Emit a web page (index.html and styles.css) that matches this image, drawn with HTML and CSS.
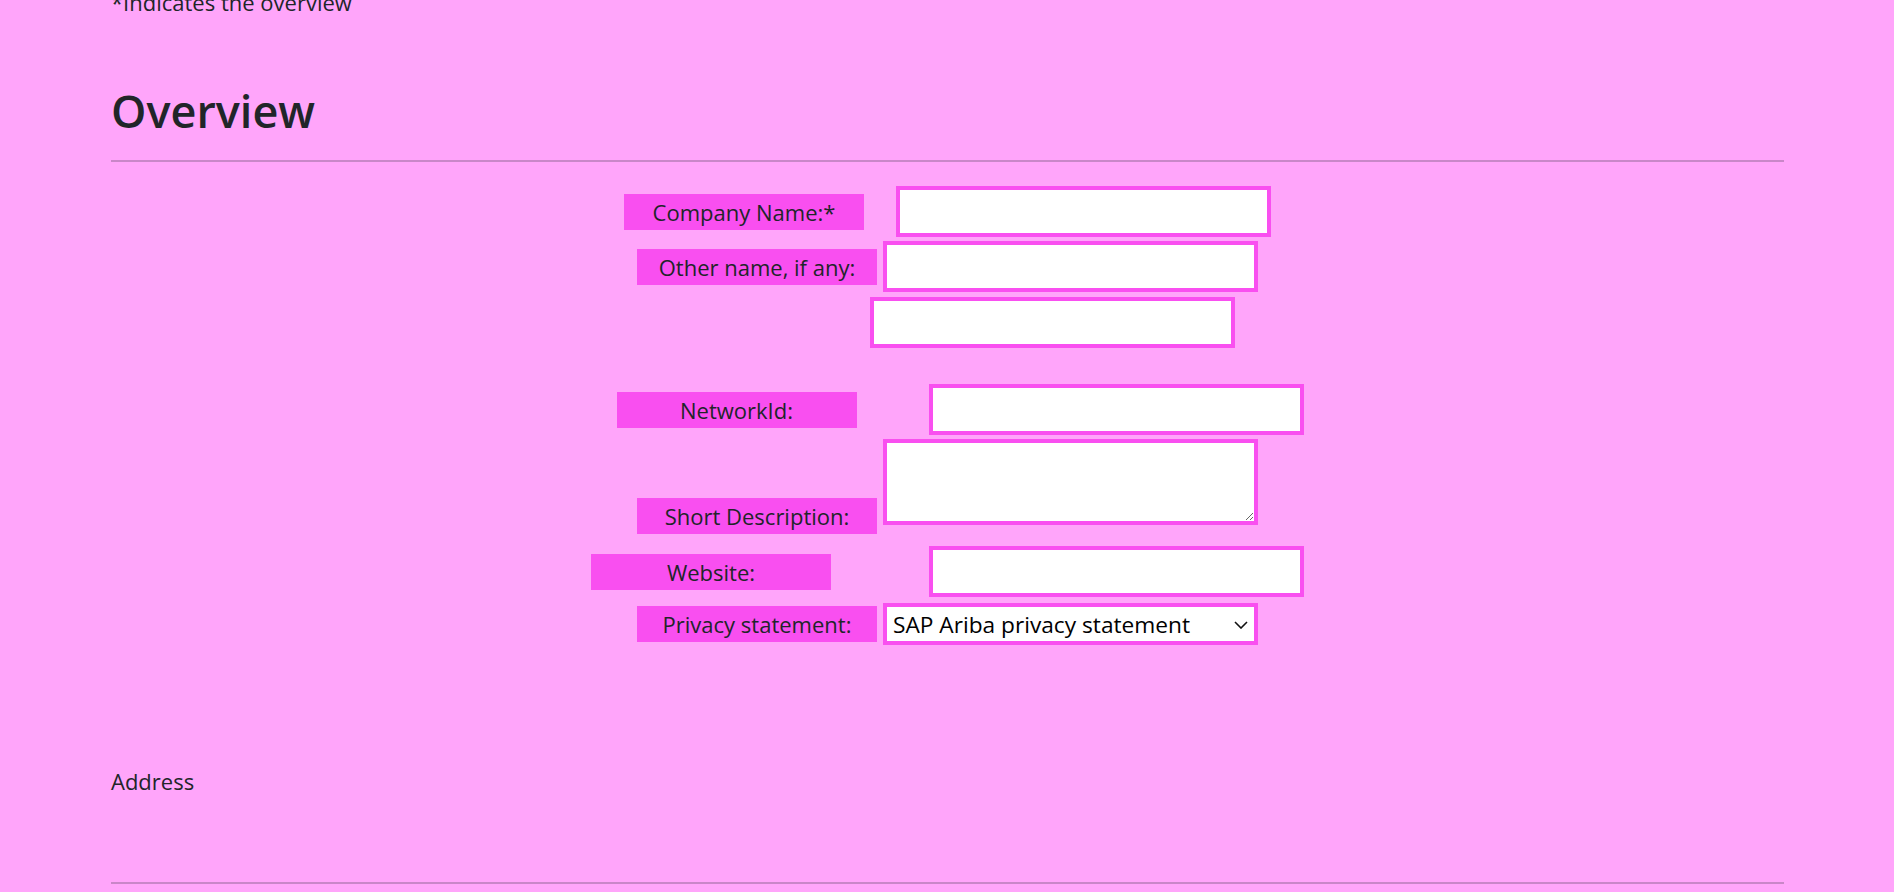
FILE: index.html
```html
<!DOCTYPE html>
<html lang="en">
<head>
<meta charset="utf-8">
<title>Overview</title>
<link rel="stylesheet" href="styles.css">
</head>
<body>
<main class="page">
  <p class="note">*Indicates the overview</p>
  <h1 class="title">Overview</h1>
  <hr class="rule">
  <form class="form">
    <div class="row row-1">
      <label class="lbl" for="company">Company Name:*</label>
      <input class="field" id="company" type="text">
    </div>
    <div class="row row-2">
      <label class="lbl" for="other">Other name, if any:</label>
      <input class="field" id="other" type="text">
    </div>
    <div class="row row-3">
      <input class="field field-narrow" type="text" aria-label="Other name, continued">
    </div>
    <div class="row row-4">
      <label class="lbl lbl-shift" for="network">NetworkId:</label>
      <input class="field" id="network" type="text">
    </div>
    <div class="row row-5">
      <label class="lbl lbl-low" for="desc">Short Description:</label>
      <textarea class="area" id="desc"></textarea>
    </div>
    <div class="row row-6">
      <label class="lbl" for="website">Website:</label>
      <input class="field" id="website" type="text">
    </div>
    <div class="row row-7">
      <label class="lbl" for="privacy">Privacy statement:</label>
      <div class="pick-wrap">
        <select class="pick" id="privacy">
          <option>SAP Ariba privacy statement</option>
        </select>
        <svg class="chev" width="14" height="8" viewBox="0 0 14 8" aria-hidden="true">
          <path d="M1 1 L7 7 L13 1" fill="none" stroke="#111" stroke-width="1.6"/>
        </svg>
      </div>
    </div>
  </form>
  <p class="section">Address</p>
  <hr class="rule rule-bottom">
</main>
</body>
</html>
```

FILE: styles.css
```css
html, body {
  margin: 0;
  padding: 0;
  background: #ffa5fa;
}

body {
  font-family: "Open Sans", "Noto Sans", sans-serif;
  font-size: 22px;
  line-height: 33px;
  color: #212529;
  overflow: hidden;
}

.page {
  padding: 0 110px 0 111px;
}

.note {
  margin: -14px 0 0;
}

.title {
  margin: 64px 0 22px;
  font-size: 45px;
  line-height: 55px;
  font-weight: 600;
  color: #212529;
}

.rule {
  margin: 0;
  border: 0;
  border-top: 2px solid #c986c8;
  height: 0;
}

.form {
  margin-top: 24px;
  display: flex;
  flex-direction: column;
}

.row {
  display: flex;
  justify-content: center;
  align-items: center;
}

.row-1 { gap: 32px; }
.row-2 { margin-top: 4px; gap: 6px; }
.row-3 { margin-top: 5px; }
.row-4 { margin-top: 36px; gap: 72px; }
.row-5 { margin-top: 4px; gap: 6px; align-items: flex-end; }
.row-6 { margin-top: 21px; gap: 98px; }
.row-7 { margin-top: 6px; gap: 6px; }

.lbl {
  flex: none;
  width: 240px;
  height: 36px;
  line-height: 36px;
  text-align: center;
  background: #f94ff0;
  color: #212529;
}

.lbl-shift { margin-left: 25px; }
.lbl-low { margin-bottom: -9px; }

.field, .area, .pick {
  flex: none;
  box-sizing: border-box;
  width: 375px;
  border: 4px solid #f94ff0;
  background: #fff;
  font-family: "Open Sans", "Noto Sans", sans-serif;
  font-size: 22px;
  color: #000;
  margin: 0;
  border-radius: 0;
  outline: none;
}

.field {
  height: 51px;
  padding: 0 6px;
}

.field-narrow {
  width: 365px;
  margin-left: 209px;
}

.area {
  height: 86px;
  padding: 4px 6px;
  resize: both;
}

.pick-wrap {
  position: relative;
  flex: none;
  width: 375px;
  height: 42px;
}

.pick {
  display: block;
  height: 42px;
  padding: 0 30px 0 6px;
  font-size: 22.7px;
  appearance: none;
  -webkit-appearance: none;
}

.chev {
  position: absolute;
  right: 10px;
  top: 18px;
  pointer-events: none;
}

.section {
  margin: 120px 0 0;
}

.rule-bottom {
  margin-top: 84px;
}
```
